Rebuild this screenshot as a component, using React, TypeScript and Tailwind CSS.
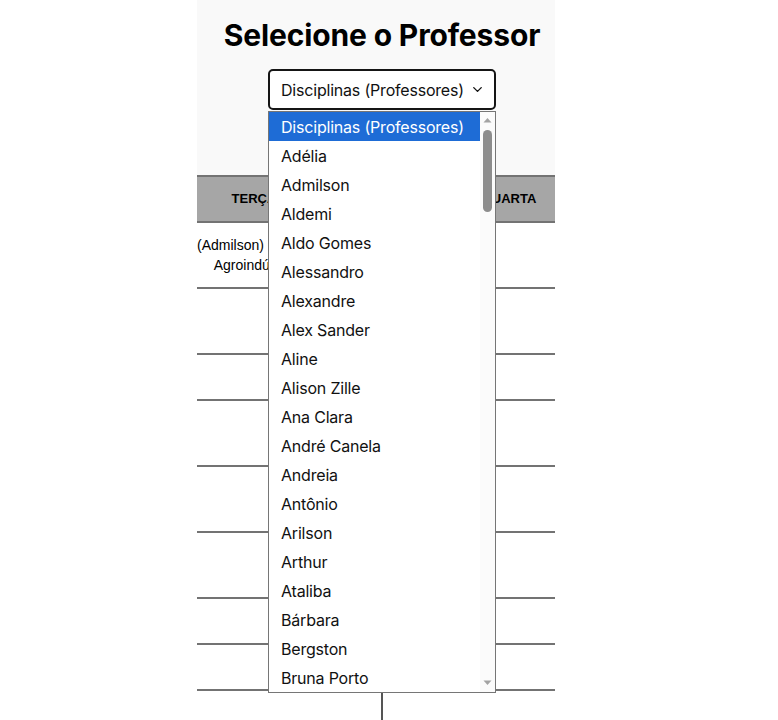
import { ChevronDown } from "lucide-react";

const professores = [
  "Disciplinas (Professores)",
  "Adélia",
  "Admilson",
  "Aldemi",
  "Aldo Gomes",
  "Alessandro",
  "Alexandre",
  "Alex Sander",
  "Aline",
  "Alison Zille",
  "Ana Clara",
  "André Canela",
  "Andreia",
  "Antônio",
  "Arilson",
  "Arthur",
  "Ataliba",
  "Bárbara",
  "Bergston",
  "Bruna Porto",
];

// row heights include the 2px bottom border
const rows = [
  { h: "h-[66px]", aula: true },
  { h: "h-[66px]" },
  { h: "h-[46px]" },
  { h: "h-[66px]" },
  { h: "h-[66px]" },
  { h: "h-[66px]" },
  { h: "h-[46px]" },
  { h: "h-[46px]" },
];

export default function App() {
  return (
    <div className="min-h-screen bg-white">
      <div className="ml-[197px] w-[358px]">
        {/* Cabeçalho */}
        <div className="h-[175px] bg-[#f9f9f9] pl-[12px] pt-[16px] flex flex-col items-center">
          <h1 className="font-['Inter',sans-serif] text-[30px] leading-[38px] font-bold text-black tracking-[-0.15px]">
            Selecione o Professor
          </h1>
          <div className="relative mt-[15px]">
            <div className="w-[228px] h-[41px] bg-white border-2 border-[#151515] rounded-[5px] flex items-center justify-between pl-[11px] pr-[9px] font-['Inter',sans-serif] text-[16px] text-[#111]">
              <span className="tracking-[-0.2px]">Disciplinas (Professores)</span>
              <ChevronDown size={15} strokeWidth={2.2} />
            </div>

            {/* Lista aberta */}
            <div className="absolute left-0 top-[42px] z-10 w-[228px] bg-white border border-[#767676] flex">
              <ul className="flex-1 font-['Inter',sans-serif] text-[16px] text-[#111]">
                {professores.map((p, i) => (
                  <li
                    key={p}
                    className={`h-[29px] flex items-center pl-[12px] tracking-[-0.2px] ${
                      i === 0 ? "bg-[#1e6cd6] text-white" : ""
                    }`}
                  >
                    {p}
                  </li>
                ))}
              </ul>
              <div className="w-[15px] bg-[#fbfbfb] flex flex-col items-center">
                <svg width="9" height="6" viewBox="0 0 9 6" className="mt-[5px]">
                  <path d="M0.5 5.5 L4.5 1 L8.5 5.5 Z" fill="#a3a3a3" />
                </svg>
                <div className="w-[9px] h-[82px] mt-[7px] rounded-full bg-[#8d8d8d]" />
                <div className="flex-1" />
                <svg width="9" height="6" viewBox="0 0 9 6" className="mb-[6px]">
                  <path d="M0.5 0.5 L4.5 5 L8.5 0.5 Z" fill="#a3a3a3" />
                </svg>
              </div>
            </div>
          </div>
        </div>

        {/* Tabela de horários */}
        <div className="font-['Liberation_Sans',Arial,sans-serif] text-[14px] text-black">
          <div className="grid grid-cols-[116px_150px_92px] h-[48px] bg-[#a6a6a6] border-y-2 border-[#737373] font-bold text-[13px]">
            <div className="flex items-center justify-center pr-[2px]">TERÇA</div>
            <div className="flex items-center justify-center" />
            <div className="flex items-center justify-center">QUARTA</div>
          </div>
          {rows.map((r, i) => (
            <div
              key={i}
              className={`grid grid-cols-[116px_150px_92px] ${r.h} border-b-2 border-[#737373]`}
            >
              <div className="flex flex-col items-center justify-center leading-[20px] whitespace-nowrap">
                {r.aula && (
                  <>
                    <span>(Admilson) Gestão</span>
                    <span>Agroindústria</span>
                  </>
                )}
              </div>
              <div />
              <div />
            </div>
          ))}
          <div className="ml-[184px] w-[2px] h-[40px] bg-[#555]" />
        </div>
      </div>
    </div>
  );
}
